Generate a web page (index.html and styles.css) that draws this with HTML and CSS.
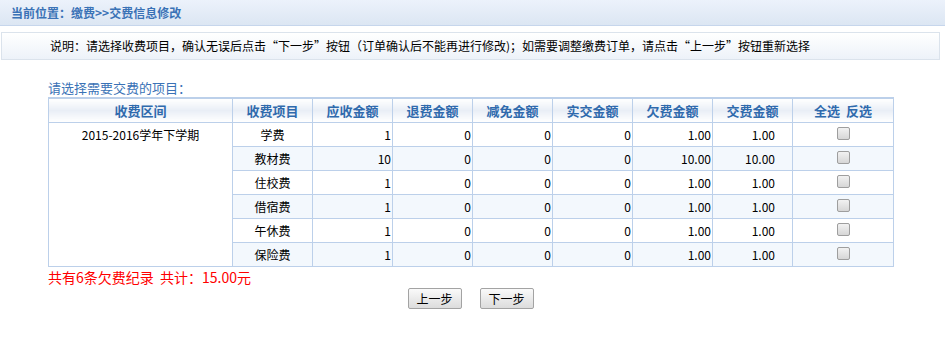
FILE: index.html
```html
<!DOCTYPE html>
<html lang="zh-CN">
<head>
<meta charset="utf-8">
<title>交费信息修改</title>
<link rel="stylesheet" href="styles.css">
</head>
<body>
<div class="topbar">当前位置：缴费&gt;&gt;交费信息修改</div>
<div class="info">说明：请选择收费项目，确认无误后点击“下一步”按钮（订单确认后不能再进行修改)；如需要调整缴费订单，请点击“上一步”按钮重新选择</div>
<div class="prompt">请选择需要交费的项目：</div>
<table class="fees">
  <colgroup>
    <col class="c-term"><col class="c-item"><col class="c-num"><col class="c-num"><col class="c-num"><col class="c-num"><col class="c-num"><col class="c-num"><col class="c-sel">
  </colgroup>
  <thead>
    <tr>
      <th>收费区间</th><th>收费项目</th><th>应收金额</th><th>退费金额</th><th>减免金额</th><th>实交金额</th><th>欠费金额</th><th>交费金额</th><th>全选&nbsp;&nbsp;反选</th>
    </tr>
  </thead>
  <tbody>
    <tr>
      <td class="term" rowspan="6">2015-2016学年下学期</td>
      <td class="item">学费</td><td class="num">1</td><td class="num">0</td><td class="num">0</td><td class="num">0</td><td class="num">1.00</td><td class="pay">1.00</td><td class="sel"><span class="cb"></span></td>
    </tr>
    <tr class="alt">
      <td class="item">教材费</td><td class="num">10</td><td class="num">0</td><td class="num">0</td><td class="num">0</td><td class="num">10.00</td><td class="pay">10.00</td><td class="sel"><span class="cb"></span></td>
    </tr>
    <tr>
      <td class="item">住校费</td><td class="num">1</td><td class="num">0</td><td class="num">0</td><td class="num">0</td><td class="num">1.00</td><td class="pay">1.00</td><td class="sel"><span class="cb"></span></td>
    </tr>
    <tr class="alt">
      <td class="item">借宿费</td><td class="num">1</td><td class="num">0</td><td class="num">0</td><td class="num">0</td><td class="num">1.00</td><td class="pay">1.00</td><td class="sel"><span class="cb"></span></td>
    </tr>
    <tr>
      <td class="item">午休费</td><td class="num">1</td><td class="num">0</td><td class="num">0</td><td class="num">0</td><td class="num">1.00</td><td class="pay">1.00</td><td class="sel"><span class="cb"></span></td>
    </tr>
    <tr class="alt">
      <td class="item">保险费</td><td class="num">1</td><td class="num">0</td><td class="num">0</td><td class="num">0</td><td class="num">1.00</td><td class="pay">1.00</td><td class="sel"><span class="cb"></span></td>
    </tr>
  </tbody>
</table>
<div class="summary">共有6条欠费纪录&nbsp;&nbsp;共计：15.00元</div>
<div class="actions">
  <button class="btn" type="button">上一步</button>
  <button class="btn" type="button">下一步</button>
</div>
</body>
</html>
```
FILE: styles.css
```css
html, body {
  margin: 0;
  padding: 0;
  background: #ffffff;
}
body {
  font-family: "Noto Sans CJK SC", "Noto Sans", sans-serif;
  font-size: 12px;
  color: #000;
}
.topbar {
  height: 25px;
  line-height: 25px;
  padding-left: 11px;
  font-size: 12px;
  font-weight: bold;
  color: #3a72b6;
  background: linear-gradient(#ecf2fb, #dce6f3);
  border-bottom: 1px solid #c6d6ec;
}
.info {
  margin: 6px 5px 0 1px;
  height: 26px;
  line-height: 26px;
  padding-left: 48px;
  border: 1px solid #dbe3ec;
  background: linear-gradient(#ffffff, #edf2f9);
  font-size: 12px;
  color: #000;
  white-space: nowrap;
}
.prompt {
  margin: 19px 0 0 48px;
  height: 18px;
  line-height: 18px;
  font-size: 13px;
  color: #3a72b6;
}
.fees {
  margin-left: 48px;
  width: 845px;
  border-collapse: collapse;
  table-layout: fixed;
  border: 1px solid #bcd0ea;
  border-top: 2px solid #bcd0ea;
}
.c-term { width: 184px; }
.c-item { width: 80px; }
.c-num { width: 80px; }
.c-sel { width: 101px; }
.fees th {
  height: 23px;
  padding: 0;
  font-size: 13px;
  font-weight: bold;
  color: #2f6aad;
  border: 1px solid #bcd0ea;
  background: linear-gradient(#ffffff 0%, #e9eef6 50%, #ffffff 100%);
  text-align: center;
}
.fees td {
  height: 23px;
  padding: 0;
  border: 1px solid #bcd0ea;
  font-size: 12px;
  line-height: 23px;
  color: #000;
}
.fees tr.alt td {
  background: #f3f8fd;
}
.fees td.term {
  background: #fff;
  text-align: center;
  vertical-align: top;
}
.fees td.item { text-align: center; }
.fees td.num { text-align: right; padding-right: 1px; }
.fees td.pay { text-align: right; padding-right: 17px; }
.fees td.sel { text-align: center; vertical-align: top; }
.cb {
  display: inline-block;
  width: 11px;
  height: 11px;
  margin-top: 4px;
  border: 1px solid #9e9e9e;
  border-radius: 2px;
  background: linear-gradient(#f2f2f2, #d6d6d6);
  vertical-align: top;
}
.summary {
  margin: 0 0 0 48px;
  height: 20px;
  line-height: 20px;
  font-size: 14px;
  color: #ff0000;
}
.actions {
  display: flex;
  justify-content: center;
  gap: 18px;
  margin-top: 1px;
  padding-right: 4px;
}
.btn {
  width: 54px;
  height: 21px;
  padding: 0;
  font-family: "Noto Sans CJK SC", "Noto Sans", sans-serif;
  font-size: 12px;
  line-height: 19px;
  color: #000;
  border: 1px solid #a3a3a3;
  border-radius: 2px;
  background: linear-gradient(#fafafa, #dcdcdc);
}
```
